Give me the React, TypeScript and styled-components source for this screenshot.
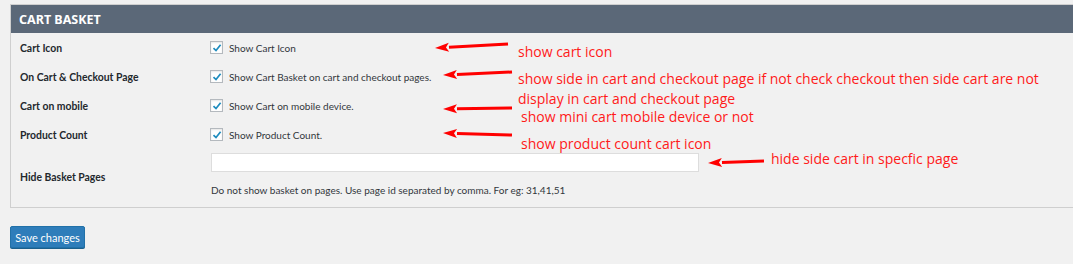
import React from "react";
import styled, { createGlobalStyle } from "styled-components";

const Global = createGlobalStyle`
  html, body { margin: 0; padding: 0; background: #f1f1f1; }
  body { font-family: "Lato", "Noto Sans", sans-serif; color: #444; overflow: hidden; }
`;

const Page = styled.div`
  position: relative;
  width: 1073px;
  height: 264px;
  padding: 4px 0 0 10px;
  box-sizing: border-box;
  overflow: hidden;
`;

const Panel = styled.section`
  width: 1080px;
  border: 1px solid #cfcfcf;
  border-right: none;
  background: #f1f1f1;
`;

const Header = styled.h2`
  margin: 0;
  height: 28px;
  display: flex;
  align-items: center;
  padding-left: 8px;
  background: #5b6878;
  color: #fff;
  font-family: "Noto Sans", sans-serif;
  font-size: 12.5px;
  font-weight: 700;
`;

const Body = styled.div`
  padding: 0 0 2px 9px;
  display: grid;
  grid-template-columns: 190px 1fr;
`;

const Label = styled.div<{ $h: number }>`
  height: ${(p) => p.$h}px;
  display: flex;
  align-items: center;
  font-size: 10.4px;
  font-weight: 700;
  color: #23282d;
`;

const Field = styled.div<{ $h: number; $top?: boolean }>`
  height: ${(p) => p.$h}px;
  display: flex;
  flex-direction: column;
  justify-content: ${(p) => (p.$top ? "flex-start" : "center")};
  padding-top: ${(p) => (p.$top ? 4 : 0)}px;
  box-sizing: border-box;
  font-size: 10px;
  color: #32373c;
`;

const CheckRow = styled.label`
  display: flex;
  align-items: center;
  gap: 6px;
`;

const Box = styled.span`
  width: 11px;
  height: 11px;
  border: 1px solid #b4b9be;
  background: #fff;
  display: inline-flex;
  align-items: center;
  justify-content: center;
  box-shadow: inset 0 1px 2px rgba(0,0,0,0.1);
`;

const TextInput = styled.div`
  width: 486px;
  height: 17px;
  border: 1px solid #ddd;
  background: #fff;
  margin-left: 1px;
`;

const Desc = styled.div`
  margin-top: 12px;
  margin-left: 1px;
  font-size: 10px;
  color: #32373c;
`;

const Save = styled.button`
  display: block;
  margin-top: 18px;
  width: 75px;
  height: 22px;
  padding: 0;
  border: 1px solid #2171a8;
  border-radius: 2px;
  background: #2e7dba;
  color: #fff;
  font-family: "Lato", sans-serif;
  font-size: 11px;
  white-space: nowrap;
  box-shadow: 0 1px 0 #1b5f8c;
`;

const Note = styled.div<{ $x: number; $y: number }>`
  position: absolute;
  left: ${(p) => p.$x}px;
  top: ${(p) => p.$y}px;
  color: #ff1a1a;
  font-family: "Open Sans", sans-serif;
  font-size: 14px;
  line-height: 19px;
  white-space: nowrap;
`;

const ArrowSvg = styled.svg`
  position: absolute;
  left: 0;
  top: 0;
  pointer-events: none;
`;

const Check = () => (
  <svg width="10" height="10" viewBox="0 0 10 10">
    <path d="M1.5 5.2 L4 7.6 L8.6 1.8" fill="none" stroke="#1e8cbe" strokeWidth="1.7" />
  </svg>
);

const rows: { label: string; text: string }[] = [
  { label: "Cart Icon", text: "Show Cart Icon" },
  { label: "On Cart & Checkout Page", text: "Show Cart Basket on cart and checkout pages." },
  { label: "Cart on mobile", text: "Show Cart on mobile device." },
  { label: "Product Count", text: "Show Product Count." },
];

const arrows = [
  { x1: 508, y1: 44, x2: 435, y2: 48 },
  { x1: 512, y1: 72, x2: 443, y2: 75 },
  { x1: 512, y1: 108, x2: 443, y2: 109 },
  { x1: 512, y1: 135, x2: 443, y2: 133 },
  { x1: 764, y1: 161, x2: 708, y2: 163 },
];

function Arrow({ x1, y1, x2, y2 }: { x1: number; y1: number; x2: number; y2: number }) {
  const ang = Math.atan2(y2 - y1, x2 - x1);
  const len = 14;
  const w = 4.5;
  const bx = x2 - Math.cos(ang) * len;
  const by = y2 - Math.sin(ang) * len;
  const px = -Math.sin(ang) * w;
  const py = Math.cos(ang) * w;
  return (
    <g>
      <line x1={x1} y1={y1} x2={bx} y2={by} stroke="#ff0000" strokeWidth={3} />
      <polygon points={`${x2},${y2} ${bx + px},${by + py} ${bx + 3 * Math.cos(ang)},${by + 3 * Math.sin(ang)} ${bx - px},${by - py}`} fill="#ff0000" />
    </g>
  );
}

export default function App() {
  return (
    <Page>
      <Global />
      <Panel>
        <Header>CART BASKET</Header>
        <Body>
          {rows.map((r) => (
            <React.Fragment key={r.label}>
              <Label $h={29}>{r.label}</Label>
              <Field $h={29}>
                <CheckRow>
                  <Box><Check /></Box>
                  {r.text}
                </CheckRow>
              </Field>
            </React.Fragment>
          ))}
          <Label $h={56}>Hide Basket Pages</Label>
          <Field $h={56} $top>
            <TextInput />
            <Desc>Do not show basket on pages. Use page id separated by comma. For eg: 31,41,51</Desc>
          </Field>
        </Body>
      </Panel>
      <Save>Save changes</Save>
      <ArrowSvg width="1073" height="264">
        {arrows.map((a, i) => (
          <Arrow key={i} {...a} />
        ))}
      </ArrowSvg>
      <Note $x={518} $y={42}>show cart icon</Note>
      <Note $x={518} $y={69}>show side in cart and checkout page if not check checkout then side cart are not</Note>
      <Note $x={518} $y={89}>display in cart and checkout page</Note>
      <Note $x={521} $y={107}>show mini cart mobile device or not</Note>
      <Note $x={521} $y={134}>show product count cart icon</Note>
      <Note $x={771} $y={149}>hide side cart in specfic page</Note>
    </Page>
  );
}
